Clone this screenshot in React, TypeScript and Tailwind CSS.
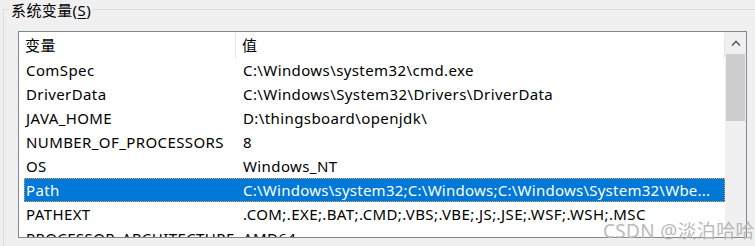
const rows: [string, string][] = [
  ['ComSpec', 'C:\\Windows\\system32\\cmd.exe'],
  ['DriverData', 'C:\\Windows\\System32\\Drivers\\DriverData'],
  ['JAVA_HOME', 'D:\\thingsboard\\openjdk\\'],
  ['NUMBER_OF_PROCESSORS', '8'],
  ['OS', 'Windows_NT'],
  ['Path', 'C:\\Windows\\system32;C:\\Windows;C:\\Windows\\System32\\Wbe...'],
  ['PATHEXT', '.COM;.EXE;.BAT;.CMD;.VBS;.VBE;.JS;.JSE;.WSF;.WSH;.MSC'],
  ['PROCESSOR_ARCHITECTURE', 'AMD64'],
]

export default function App() {
  return (
    <div
      className="relative w-[755px] h-[246px] overflow-hidden bg-[#f0f0f0] text-[15px] tracking-[0.4px] text-black"
      style={{ fontFamily: '"Noto Sans", "Noto Sans CJK SC", sans-serif' }}
    >
      {/* group box */}
      <div className="ml-[3px] mt-[9px] h-[240px] border-l border-t border-[#dcdcdc]">
        <div className="ml-[14px] mt-[21px] w-[729px] h-[207px] border border-[#828790] bg-white flex">
          <div className="flex-1 flex flex-col overflow-hidden">
            <div className="flex h-[27px] items-center">
              <div className="w-[217px] h-[25px] mt-[1px] pl-[6px] flex items-center border-r border-[#e5e5e5]">变量</div>
              <div className="flex-1 h-[25px] mt-[1px] pl-[6px] flex items-center border-r border-[#e5e5e5]">值</div>
            </div>
            {rows.map(([name, value]) => {
              const sel = name === 'Path'
              return (
                <div
                  key={name}
                  className={
                    sel
                      ? 'ml-[5px] h-[24px] flex items-center shrink-0 bg-[#0078d7] text-white border border-dotted border-[#f0a04b]'
                      : 'ml-[5px] h-[24px] flex items-center shrink-0 border border-transparent'
                  }
                >
                  <div className="w-[218px] pl-[1px] whitespace-nowrap overflow-hidden">{name}</div>
                  <div className={sel ? 'flex-1 whitespace-nowrap overflow-hidden tracking-[0.25px]' : 'flex-1 whitespace-nowrap overflow-hidden'}>
                    {value}
                  </div>
                </div>
              )
            })}
          </div>
          {/* scrollbar */}
          <div className="w-[21px] bg-[#f0f0f0] flex flex-col">
            <div className="h-[22px] flex items-center justify-center">
              <svg width="10" height="6" viewBox="0 0 10 6">
                <path d="M1 5.5 L5 1.5 L9 5.5" fill="none" stroke="#606060" strokeWidth="1.6" />
              </svg>
            </div>
            <div className="mx-[1px] h-[67px] bg-[#cdcdcd]" />
          </div>
        </div>
      </div>

      {/* group label */}
      <div className="absolute left-[9px] top-[1px] px-[2px] bg-[#f0f0f0] leading-[18px]">
        系统变量(<span className="underline underline-offset-2">S</span>)
      </div>

      {/* watermark */}
      <div className="absolute left-[603px] top-[217px] text-[19px] tracking-[0.3px] text-[#b4b4b4] opacity-90 whitespace-nowrap">
        CSDN @淡泊哈哈
      </div>
    </div>
  )
}
